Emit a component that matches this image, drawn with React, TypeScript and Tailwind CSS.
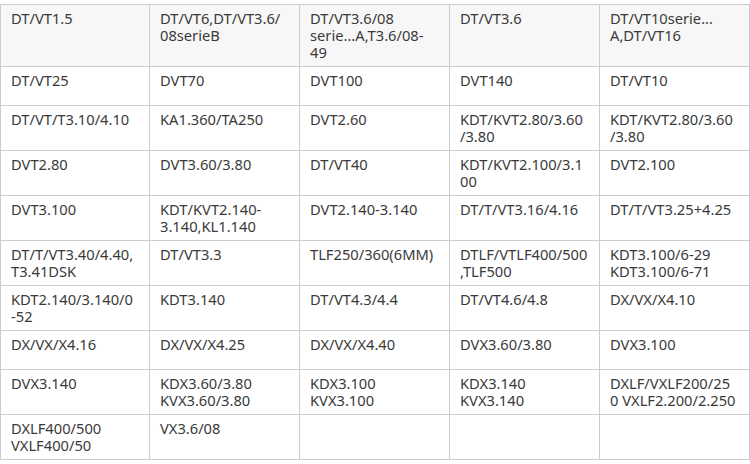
import React from "react";

const rows: string[][][] = [
  [["DT/VT1.5"], ["DT/VT6,DT/VT3.6/", "08serieB"], ["DT/VT3.6/08", "serie...A,T3.6/08-", "49"], ["DT/VT3.6"], ["DT/VT10serie...", "A,DT/VT16"]],
  [["DT/VT25"], ["DVT70"], ["DVT100"], ["DVT140"], ["DT/VT10"]],
  [["DT/VT/T3.10/4.10"], ["KA1.360/TA250"], ["DVT2.60"], ["KDT/KVT2.80/3.60", "/3.80"], ["KDT/KVT2.80/3.60", "/3.80"]],
  [["DVT2.80"], ["DVT3.60/3.80"], ["DT/VT40"], ["KDT/KVT2.100/3.1", "00"], ["DVT2.100"]],
  [["DVT3.100"], ["KDT/KVT2.140-", "3.140,KL1.140"], ["DVT2.140-3.140"], ["DT/T/VT3.16/4.16"], ["DT/T/VT3.25+4.25"]],
  [["DT/T/VT3.40/4.40,", "T3.41DSK"], ["DT/VT3.3"], ["TLF250/360(6MM)"], ["DTLF/VTLF400/500", ",TLF500"], ["KDT3.100/6-29", "KDT3.100/6-71"]],
  [["KDT2.140/3.140/0", "-52"], ["KDT3.140"], ["DT/VT4.3/4.4"], ["DT/VT4.6/4.8"], ["DX/VX/X4.10"]],
  [["DX/VX/X4.16"], ["DX/VX/X4.25"], ["DX/VX/X4.40"], ["DVX3.60/3.80"], ["DVX3.100"]],
  [["DVX3.140"], ["KDX3.60/3.80", "KVX3.60/3.80"], ["KDX3.100", "KVX3.100"], ["KDX3.140", "KVX3.140"], ["DXLF/VXLF200/25", "0 VXLF2.200/2.250"]],
  [["DXLF400/500", "VXLF400/50"], ["VX3.6/08"], [], [], []],
];

export default function App() {
  return (
    <div className="w-[750px] h-[464px] bg-white pt-[4px]" style={{ fontFamily: '"Noto Sans", "Open Sans", sans-serif' }}>
      <div className="grid grid-cols-[149px_150px_150px_150px_150px] border-l border-t border-[#cccccc] w-[750px]">
        {rows.map((row, ri) =>
          row.map((cell, ci) => (
            <div
              key={`${ri}-${ci}`}
              className={`min-h-[39px] border-r border-b border-[#cccccc] pt-[5px] pb-[5px] pl-[10px] pr-[4px] text-[14.7px] leading-[17px] text-[#3a3a3a] ${ri === 0 ? "bg-[#f7f7f7]" : "bg-white"}`}
            >
              {cell.map((line, li) => (
                <div key={li} className="whitespace-nowrap">
                  {line}
                </div>
              ))}
            </div>
          ))
        )}
      </div>
    </div>
  );
}
